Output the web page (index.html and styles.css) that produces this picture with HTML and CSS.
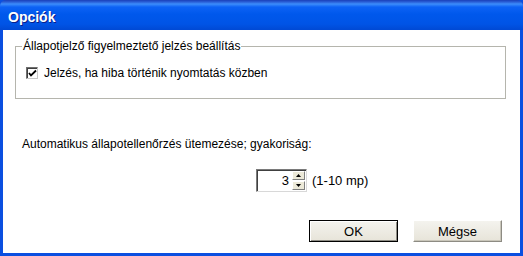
FILE: index.html
```html
<!DOCTYPE html>
<html lang="hu">
  <head>
    <meta charset="UTF-8" />
    <title>Opciók</title>
    <link rel="stylesheet" href="styles.css">
  </head>
  <body>
    <div class="window">
      <div class="titlebar">Opciók</div>
      <div class="content">
        <fieldset class="group">
          <legend class="group-title">Állapotjelző figyelmeztető jelzés beállítás</legend>
          <label class="check-row">
            <span class="checkbox">
              <svg width="9" height="9" viewBox="0 0 9 9"><polyline points="1,4 3,6.5 8,1.5" fill="none" stroke="#000" stroke-width="1.8"/></svg>
            </span>
            Jelzés, ha hiba történik nyomtatás közben
          </label>
        </fieldset>

        <p class="schedule-label">Automatikus állapotellenőrzés ütemezése; gyakoriság:</p>

        <div class="spin-row">
          <div class="spinner">
            <span class="spin-value">3</span>
            <div class="spin-buttons">
              <div class="spin-btn">
                <svg width="5" height="3" viewBox="0 0 5 3"><polygon points="0,3 2.5,0 5,3" fill="#000"/></svg>
              </div>
              <div class="spin-btn">
                <svg width="5" height="3" viewBox="0 0 5 3"><polygon points="0,0 5,0 2.5,3" fill="#000"/></svg>
              </div>
            </div>
          </div>
          <span class="spin-range">(1-10 mp)</span>
        </div>

        <div class="button-row">
          <button class="btn btn-default">OK</button>
          <button class="btn">Mégse</button>
        </div>
      </div>
    </div>
  </body>
</html>
```

FILE: styles.css
```css
* {
  margin: 0;
  padding: 0;
  box-sizing: border-box;
}

body {
  width: 523px;
  height: 256px;
  overflow: hidden;
  font-family: "Liberation Sans", Arial, sans-serif;
  font-size: 12px;
  color: #000;
}

.window {
  width: 523px;
  height: 256px;
  display: flex;
  flex-direction: column;
  background-color: #0a4fe0;
  padding: 0 3px 3px 3px;
}

.titlebar {
  height: 30px;
  margin: 0 -3px;
  padding: 4px 0 0 8px;
  display: flex;
  align-items: center;
  color: #fff;
  font-size: 14px;
  font-weight: bold;
  text-shadow: 1px 1px 0 #0a1e8a;
  background: linear-gradient(to bottom, #1a3fb8 0, #2a5fd8 2px, #3d8dfb 4px, #0d62f5 7px, #0058ec 14px, #0054e6 24px, #0049d4 30px);
  border-radius: 6px 6px 0 0;
}

.content {
  flex: 1;
  background-color: #fff;
  display: flex;
  flex-direction: column;
}

.group {
  margin: 9px 14px 0 12px;
  padding: 0 0 0 6px;
  height: 60px;
  border: 1px solid #b5b5ad;
}

.group-title {
  padding: 0 1px;
  line-height: 14px;
}

.check-row {
  display: flex;
  align-items: center;
  gap: 6px;
  margin: 13px 0 0 4px;
}

.checkbox {
  width: 12px;
  height: 12px;
  display: flex;
  align-items: center;
  justify-content: center;
  background-color: #fff;
  border-top: 1px solid #6f6f6f;
  border-left: 1px solid #6f6f6f;
  border-right: 1px solid #c8c8c8;
  border-bottom: 1px solid #c8c8c8;
  box-shadow: inset 1px 1px 0 #404040;
}

.schedule-label {
  margin: 38px 0 0 19px;
  line-height: 14px;
}

.spin-row {
  display: flex;
  align-items: center;
  gap: 5px;
  margin: 18px 0 0 253px;
}

.spinner {
  width: 51px;
  height: 23px;
  display: flex;
  align-items: center;
  justify-content: flex-end;
  gap: 3px;
  padding: 0 1px;
  border-top: 1px solid #7a7a7a;
  border-left: 1px solid #7a7a7a;
  border-right: 1px solid #d8d8d8;
  border-bottom: 1px solid #d8d8d8;
  box-shadow: inset 1px 1px 0 #404040;
}

.spin-value {
  font-size: 13px;
}

.spin-buttons {
  display: flex;
  flex-direction: column;
  gap: 1px;
}

.spin-btn {
  width: 13px;
  height: 9px;
  display: flex;
  align-items: center;
  justify-content: center;
  background-color: #ece9d8;
  border-top: 1px solid #fff;
  border-left: 1px solid #fff;
  border-right: 1px solid #808080;
  border-bottom: 1px solid #808080;
}

.spin-range {
  font-size: 13px;
}

.button-row {
  display: flex;
  justify-content: flex-end;
  gap: 15px;
  margin: 28px 18px 0 0;
}

.btn {
  width: 89px;
  height: 22px;
  font-family: "Liberation Sans", Arial, sans-serif;
  font-size: 13px;
  color: #000;
  background: linear-gradient(to bottom, #f4f3ee, #e7e4d9);
  border-top: 1px solid #fff;
  border-left: 1px solid #fff;
  border-right: 1px solid #8d8b83;
  border-bottom: 1px solid #8d8b83;
  box-shadow: inset -1px -1px 0 #c9c6ba;
}

.btn-default {
  border: 1px solid #000;
  box-shadow: inset 1px 1px 0 #fff, inset -1px -1px 0 #8d8b83;
}
```
